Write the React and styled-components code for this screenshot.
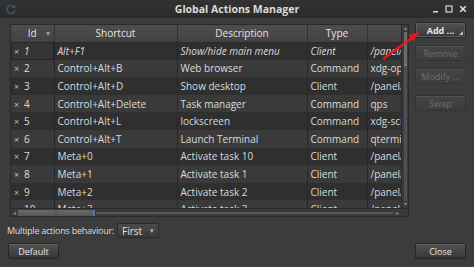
import React from "react";
import styled, { createGlobalStyle } from "styled-components";

const GlobalStyle = createGlobalStyle`
  html, body {
    margin: 0;
    padding: 0;
    background: #3c3c3c;
  }
  body {
    font-family: "Open Sans", "Noto Sans", sans-serif;
    font-size: 10px;
    color: #dcdcdc;
  }
  * {
    box-sizing: border-box;
  }
`;

const actions = [
  { id: 1, shortcut: "Alt+F1", desc: "Show/hide main menu", type: "Client", cmd: "/panel/mainmenu/show_hide", current: true },
  { id: 2, shortcut: "Control+Alt+B", desc: "Web browser", type: "Command", cmd: "xdg-open http://" },
  { id: 3, shortcut: "Control+Alt+D", desc: "Show desktop", type: "Client", cmd: "/panel/showdesktop" },
  { id: 4, shortcut: "Control+Alt+Delete", desc: "Task manager", type: "Command", cmd: "qps" },
  { id: 5, shortcut: "Control+Alt+L", desc: "lockscreen", type: "Command", cmd: "xdg-screensaver lock" },
  { id: 6, shortcut: "Control+Alt+T", desc: "Launch Terminal", type: "Command", cmd: "qterminal" },
  { id: 7, shortcut: "Meta+0", desc: "Activate task 10", type: "Client", cmd: "/panel/taskbar/task_10" },
  { id: 8, shortcut: "Meta+1", desc: "Activate task 1", type: "Client", cmd: "/panel/taskbar/task_1" },
  { id: 9, shortcut: "Meta+2", desc: "Activate task 2", type: "Client", cmd: "/panel/taskbar/task_2" },
  { id: 10, shortcut: "Meta+3", desc: "Activate task 3", type: "Client", cmd: "/panel/taskbar/task_3" },
];

const columns = [
  { key: "id", label: "Id", width: 43 },
  { key: "shortcut", label: "Shortcut", width: 123 },
  { key: "desc", label: "Description", width: 130 },
  { key: "type", label: "Type", width: 60 },
  { key: "cmd", label: "", width: 40 },
];

export default function App() {
  return (
    <Window>
      <GlobalStyle />
      <TitleBar>
        <AppIcon viewBox="0 0 12 12">
          <path d="M9.5 4.5A4 4 0 1 0 10 7" fill="none" stroke="#3d5566" strokeWidth="1.6" />
          <path d="M10.5 1.5v3.5H7z" fill="#3d5566" />
        </AppIcon>
        <Title>Global Actions Manager</Title>
        <WinControls>
          <WinButton>
            <svg width="7" height="7" viewBox="0 0 7 7"><rect x="1" y="5" width="5" height="1.5" fill="#d8d8d8" /></svg>
          </WinButton>
          <WinButton>
            <svg width="8" height="8" viewBox="0 0 8 8"><rect x="1" y="1" width="6" height="6" fill="none" stroke="#d8d8d8" strokeWidth="1.2" /></svg>
          </WinButton>
          <WinButton>
            <svg width="8" height="8" viewBox="0 0 8 8"><path d="M1.2 1.2l5.6 5.6M6.8 1.2L1.2 6.8" stroke="#e0e0e0" strokeWidth="1.6" /></svg>
          </WinButton>
        </WinControls>
      </TitleBar>

      <Content>
        <Main>
          <TableFrame>
            <TableRow>
              <Viewport>
                <Table>
                  <colgroup>
                    {columns.map((c) => (
                      <col key={c.key} style={{ width: c.width }} />
                    ))}
                  </colgroup>
                  <thead>
                    <tr>
                      {columns.map((c) => (
                        <Th key={c.key}>
                          {c.label}
                          {c.key === "id" && <SortArrow>▾</SortArrow>}
                        </Th>
                      ))}
                    </tr>
                  </thead>
                  <tbody>
                    {actions.map((a, i) => (
                      <Tr key={a.id} $odd={i % 2 === 0} $current={a.current}>
                        <IdCell $current={a.current}>
                          <Check>×</Check>
                          {a.id}
                        </IdCell>
                        <Td>{a.shortcut}</Td>
                        <Td>{a.desc}</Td>
                        <Td>{a.type}</Td>
                        <Td>{a.cmd}</Td>
                      </Tr>
                    ))}
                  </tbody>
                </Table>
              </Viewport>
              <VScroll>
                <ScrollArrow>▴</ScrollArrow>
                <VTrack>
                  <VThumb />
                </VTrack>
                <ScrollArrow>▾</ScrollArrow>
              </VScroll>
            </TableRow>
            <HScroll>
              <HArrow>◂</HArrow>
              <HThumb>⁝⁝⁝</HThumb>
              <HTrack />
              <HArrow>▸</HArrow>
            </HScroll>
          </TableFrame>

          <SideButtons>
            <Button $default>
              Add ...
              <MenuCorner />
            </Button>
            <Button disabled>Remove</Button>
            <Button disabled>Modify ...</Button>
            <Button disabled $gap>Swap</Button>
          </SideButtons>
        </Main>

        <BehaviourRow>
          <Label>Multiple actions behaviour:</Label>
          <Combo>
            First
            <ComboArrow>▾</ComboArrow>
          </Combo>
        </BehaviourRow>

        <Footer>
          <Button>Default</Button>
          <Button>Close</Button>
        </Footer>
      </Content>

      <Annotation viewBox="0 0 474 267">
        <path d="M383 59 L413 37" stroke="#e8161b" strokeWidth="2.2" fill="none" />
        <path d="M420 32 L408 35 L413 41 Z" fill="#e8161b" />
      </Annotation>
    </Window>
  );
}

const Window = styled.div`
  position: relative;
  width: 474px;
  height: 267px;
  display: flex;
  flex-direction: column;
  background: #3c3c3c;
  overflow: hidden;
`;

const TitleBar = styled.div`
  height: 18px;
  flex: none;
  display: flex;
  align-items: center;
  padding: 0 6px 0 5px;
  background: linear-gradient(#323232, #2b2b2b);
  position: relative;
`;

const AppIcon = styled.svg`
  width: 12px;
  height: 12px;
`;

const Title = styled.div`
  position: absolute;
  left: 0;
  right: 0;
  text-align: center;
  font-weight: bold;
  font-size: 10.5px;
  color: #dfdbd2;
  pointer-events: none;
`;

const WinControls = styled.div`
  margin-left: auto;
  display: flex;
  gap: 4px;
  align-items: center;
`;

const WinButton = styled.div`
  width: 10px;
  height: 10px;
  display: flex;
  align-items: center;
  justify-content: center;
`;

const Content = styled.div`
  flex: 1;
  display: flex;
  flex-direction: column;
  padding: 6px 8px 8px 8px;
`;

const Main = styled.div`
  display: flex;
  gap: 6px;
  height: 193px;
`;

const TableFrame = styled.div`
  width: 399px;
  flex: none;
  margin-left: 2px;
  display: flex;
  flex-direction: column;
  border: 1px solid #2a2a2a;
`;

const TableRow = styled.div`
  flex: 1;
  display: flex;
  min-height: 0;
`;

const Viewport = styled.div`
  flex: 1;
  overflow: hidden;
  background: #2e2e2e;
`;

const Table = styled.table`
  table-layout: fixed;
  border-collapse: collapse;
  width: 396px;
`;

const Th = styled.th`
  height: 17px;
  padding: 0;
  font-weight: normal;
  text-align: center;
  color: #e4e4e4;
  background: linear-gradient(#4d4d4d, #424242);
  border-right: 1px solid #2f2f2f;
  border-bottom: 1px solid #2a2a2a;
  position: relative;
  white-space: nowrap;
  overflow: hidden;
`;

const SortArrow = styled.span`
  position: absolute;
  right: 4px;
  top: 2px;
  font-size: 8px;
  color: #9a9a9a;
`;

const Tr = styled.tr`
  height: 17.6px;
  background: ${(p) => (p.$odd ? "#2f2f2f" : "#3a3a3a")};
  font-style: ${(p) => (p.$current ? "italic" : "normal")};
`;

const Td = styled.td`
  padding: 0 0 0 3px;
  white-space: nowrap;
  overflow: hidden;
  color: #dadada;
  border-right: 1px solid rgba(0, 0, 0, 0.12);
`;

const IdCell = styled(Td)`
  padding-left: 3px;
  outline: ${(p) => (p.$current ? "1px solid #262626" : "none")};
  outline-offset: -1px;
  background: ${(p) => (p.$current ? "#353535" : "transparent")};
`;

const Check = styled.span`
  display: inline-block;
  width: 10px;
  font-size: 9px;
  font-style: normal;
  color: #bdbdbd;
`;

const VScroll = styled.div`
  width: 7px;
  flex: none;
  display: flex;
  flex-direction: column;
  align-items: center;
  background: #3a3a3a;
  border-left: 1px solid #2a2a2a;
`;

const ScrollArrow = styled.div`
  font-size: 6px;
  line-height: 7px;
  color: #8a8a8a;
`;

const VTrack = styled.div`
  flex: 1;
  width: 3px;
  background: #505050;
`;

const VThumb = styled.div`
  width: 3px;
  height: 34px;
  background: #6b6b6b;
  border-bottom: 2px solid #5a7fa8;
`;

const HScroll = styled.div`
  height: 8px;
  flex: none;
  display: flex;
  align-items: center;
  gap: 1px;
  padding-right: 8px;
  background: #3a3a3a;
  border-top: 1px solid #2a2a2a;
`;

const HArrow = styled.div`
  font-size: 6px;
  color: #8a8a8a;
  width: 6px;
  text-align: center;
`;

const HThumb = styled.div`
  width: 77px;
  height: 6px;
  background: linear-gradient(#6a6a6a, #555555);
  border-right: 2px solid #4a78b5;
  font-size: 6px;
  line-height: 6px;
  color: #3a3a3a;
  text-align: center;
  letter-spacing: -1px;
`;

const HTrack = styled.div`
  flex: 1;
  height: 2px;
  background: #5a5a5a;
`;

const SideButtons = styled.div`
  display: flex;
  flex-direction: column;
  gap: 7px;
  width: 51px;
  flex: none;
  margin-top: -2px;
`;

const Button = styled.button`
  position: relative;
  height: 16px;
  width: 51px;
  padding: 0;
  margin-top: ${(p) => (p.$gap ? "4px" : "0")};
  font-family: inherit;
  font-size: 9px;
  font-weight: ${(p) => (p.$default ? "bold" : "normal")};
  color: ${(p) => (p.disabled ? "#6e6e6e" : "#e6e6e6")};
  background: ${(p) =>
    p.disabled
      ? "linear-gradient(#444444, #3d3d3d)"
      : "linear-gradient(#525252, #383838)"};
  border: 1px solid ${(p) => (p.disabled ? "#333333" : "#262626")};
  border-radius: 2px;
  white-space: nowrap;
  box-shadow: ${(p) =>
    p.$default ? "inset 0 0 0 1px #5c5c5c" : "inset 0 1px 0 rgba(255,255,255,0.08)"};
`;

const MenuCorner = styled.span`
  position: absolute;
  right: 2px;
  bottom: 2px;
  width: 0;
  height: 0;
  border-left: 4px solid transparent;
  border-bottom: 4px solid #bcbcbc;
`;

const BehaviourRow = styled.div`
  display: flex;
  align-items: center;
  gap: 3px;
  margin-top: 6px;
  height: 15px;
`;

const Label = styled.span`
  color: #dcdcdc;
  font-size: 9px;
  letter-spacing: -0.25px;
  margin-left: -1px;
`;

const Combo = styled.div`
  width: 42px;
  height: 15px;
  padding: 0 4px 0 4px;
  display: flex;
  align-items: center;
  justify-content: space-between;
  background: linear-gradient(#4a4a4a, #3a3a3a);
  border: 1px solid #2a2a2a;
  border-radius: 2px;
  color: #e0e0e0;
`;

const ComboArrow = styled.span`
  font-size: 7px;
  color: #bcbcbc;
`;

const Footer = styled.div`
  margin-top: 5px;
  display: flex;
  justify-content: space-between;
`;

const Annotation = styled.svg`
  position: absolute;
  left: 0;
  top: 0;
  width: 474px;
  height: 267px;
  pointer-events: none;
`;
